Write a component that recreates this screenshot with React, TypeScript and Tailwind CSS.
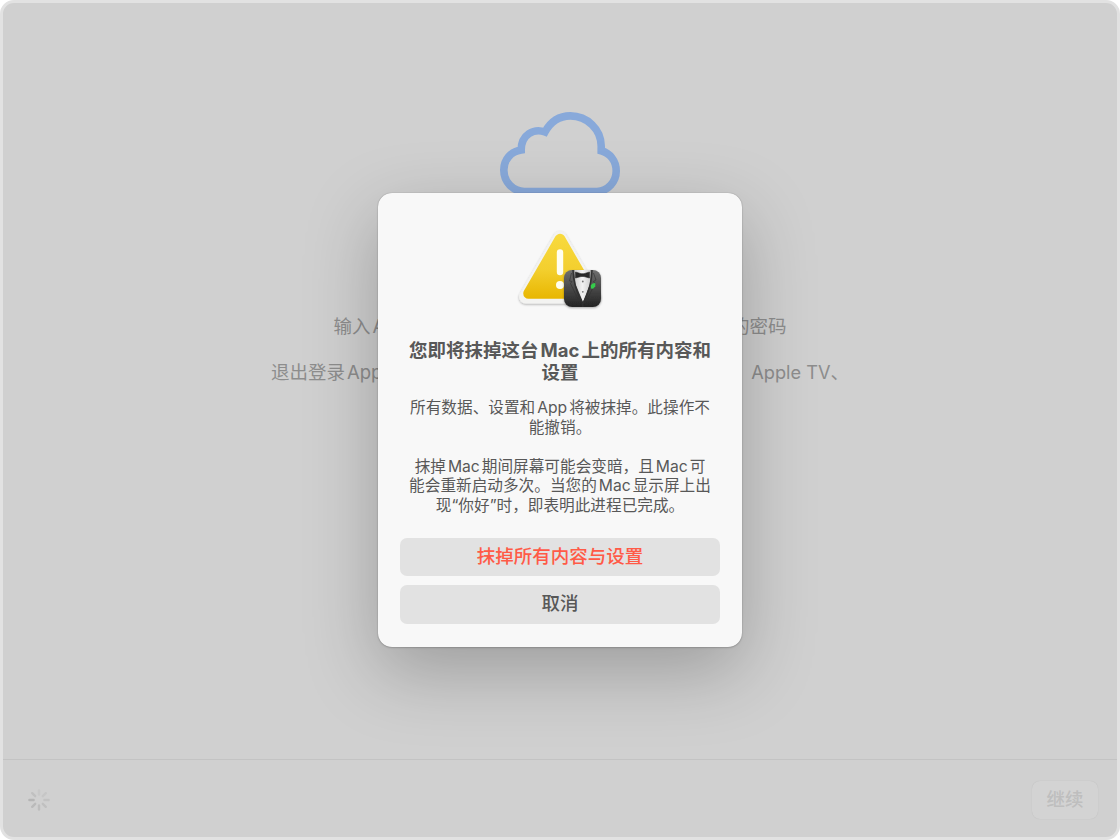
import type { ReactNode } from 'react';

function Line({ children, className = '' }: { children: ReactNode; className?: string }) {
  return <span className={`flex items-baseline justify-center whitespace-nowrap ${className}`}>{children}</span>;
}

function Latin({ children }: { children: ReactNode }) {
  return <span className="mx-[2px] inline-block font-[Inter]">{children}</span>;
}

function Cloud() {
  return (
    <svg width="140" height="100" viewBox="0 0 140 100" fill="none" stroke="#88a9da" strokeWidth="7.6">
      <path d="M34.5 91.5 H107 A19.8 20.5 0 0 0 126.2 70.7 C126.2 61 120 53 111.2 50.7 V46 A31 30.4 0 0 0 80.3 15.9 C70 15.9 61 21 55 32 C44 28 31.2 34.5 31.2 50 C21 51.5 13.8 59.5 13.8 70 A20.6 21.5 0 0 0 34.5 91.5 Z" />
    </svg>
  );
}

function WarningIcon() {
  return (
    <svg width="100" height="92" viewBox="0 0 100 92">
      <defs>
        <linearGradient id="yellow" x1="0" y1="12" x2="0" y2="77" gradientUnits="userSpaceOnUse">
          <stop offset="0" stopColor="#f8da3e" />
          <stop offset="0.55" stopColor="#f3cf2e" />
          <stop offset="1" stopColor="#e8b600" />
        </linearGradient>
        <linearGradient id="suit" x1="0" y1="0" x2="0" y2="1">
          <stop offset="0" stopColor="#707070" />
          <stop offset="0.5" stopColor="#484848" />
          <stop offset="1" stopColor="#242424" />
        </linearGradient>
        <linearGradient id="shirt" x1="0" y1="0" x2="1" y2="0">
          <stop offset="0" stopColor="#cfcfcf" />
          <stop offset="0.5" stopColor="#f2f2f2" />
          <stop offset="1" stopColor="#cfcfcf" />
        </linearGradient>
        <filter id="soft" x="-20%" y="-20%" width="140%" height="150%">
          <feDropShadow dx="0" dy="1" stdDeviation="1" floodOpacity="0.32" />
        </filter>
        <clipPath id="tile"><rect x="54" y="48" width="37" height="37" rx="8" /></clipPath>
      </defs>
      <path d="M50 15.5 L84.5 75 H15.5 Z" fill="#f3f3f1" stroke="#f3f3f1" strokeWidth="13" strokeLinejoin="round" filter="url(#soft)" />
      <path d="M50 17 L81.5 71.5 H18.5 Z" fill="url(#yellow)" stroke="url(#yellow)" strokeWidth="10.5" strokeLinejoin="round" />
      <path d="M50 30.5 V50" stroke="#fffef0" strokeWidth="6.4" strokeLinecap="round" />
      <circle cx="50" cy="63" r="4" fill="#fffef0" />
      <g filter="url(#soft)">
        <g clipPath="url(#tile)">
          <rect x="54" y="48" width="37" height="37" fill="url(#suit)" />
          <path d="M64.5 48 H80.5 L80 62 L73 80 L65.5 62 Z" fill="url(#shirt)" />
          <path d="M63 48 C63 58 67 71 72.8 82 V85 M82 48 C82 58 79 70 72.8 82" fill="none" stroke="#303030" strokeWidth="1.5" />
          <path d="M61.5 51 L59.5 59 L62 59.5 L60.5 61.5 L68 77 M83.5 51 L86 58 L83.5 59.5 L85 61.5 L77.5 77" fill="none" stroke="#303030" strokeWidth="0.6" />
          <path d="M65.5 50 L71 51.7 H74 L79.5 50 V56 L74 54.5 H71 L65.5 56 Z" fill="#292929" stroke="#292929" strokeWidth="0.6" strokeLinejoin="round" />
          <circle cx="72.8" cy="59.5" r="0.9" fill="#777" />
          <circle cx="72.8" cy="69.8" r="0.9" fill="#777" />
          <path d="M81 66.5 L80.7 63.5 L82.5 61.6 L85.4 61 L85.2 64.4 L83 66.7 Z" fill="#35cc4b" />
        </g>
      </g>
    </svg>
  );
}

const spokes = [
  { angle: 0, tone: '#c8c8c8' },
  { angle: 45, tone: '#c6c6c6' },
  { angle: 90, tone: '#c2c2c2' },
  { angle: 135, tone: '#c0c0c0' },
  { angle: 180, tone: '#bdbdbd' },
  { angle: 225, tone: '#bababa' },
  { angle: 270, tone: '#b5b5b5' },
  { angle: 315, tone: '#c0c0c0' },
];

function Spinner() {
  return (
    <svg width="24" height="24" viewBox="-12 -12 24 24" strokeWidth="2.4" strokeLinecap="round">
      {spokes.map(({ angle, tone }) => (
        <path key={angle} d="M0 -5.4 V-9.6" stroke={tone} transform={`rotate(${angle})`} />
      ))}
    </svg>
  );
}

function EraseDialog() {
  return (
    <section role="alertdialog" className="flex h-[454px] w-[364px] flex-col items-center rounded-[14px] bg-[#f8f8f8] px-[22px] pt-[29px] text-[#585858] shadow-[0_0_1px_rgba(0,0,0,0.4),0_1px_2px_rgba(0,0,0,0.15),0_24px_72px_rgba(0,0,0,0.25)]">
      <WarningIcon />
      <h1 className="mt-[25px] text-[18.5px] leading-[22px] font-bold">
        <Line>您即将抹掉这台<Latin>Mac</Latin>上的所有内容和</Line>
        <Line>设置</Line>
      </h1>
      <p className="mt-[15px] text-[15.65px] leading-[19.6px]">
        <Line>所有数据、设置和<Latin>App</Latin>将被抹掉。此操作不</Line>
        <Line>能撤销。</Line>
      </p>
      <p className="mt-[19.6px] text-[15.65px] leading-[19.6px]">
        <Line>抹掉<Latin>Mac</Latin>期间屏幕可能会变暗，且<Latin>Mac</Latin>可</Line>
        <Line>能会重新启动多次。当您的<Latin>Mac</Latin>显示屏上出</Line>
        <Line>现<span className="font-[Inter]">“</span>你好<span className="font-[Inter]">”</span>时，即表明此进程已完成。</Line>
      </p>
      <div className="mt-[22px] flex w-full flex-col gap-[9px] text-[18.5px] font-medium">
        <button className="flex h-[38.5px] shrink-0 items-center justify-center rounded-[7px] bg-[#e2e2e2] text-[#ff5a47]"><span>抹掉所有内容与设置</span></button>
        <button className="flex h-[38.5px] shrink-0 items-center justify-center rounded-[7px] bg-[#e2e2e2]"><span>取消</span></button>
      </div>
    </section>
  );
}

export default function App() {
  return (
    <div className="h-[840px] w-[1120px] overflow-hidden bg-white font-[Inter,'Noto_Sans_CJK_SC',sans-serif]">
      <main className="relative flex h-full flex-col overflow-hidden rounded-[14px] border-[3px] border-[#e2e2e2] bg-[#d0d0d0]">
        <div className="flex flex-1 flex-col items-center pt-[97px] text-[18.5px] leading-[28px] text-[#8d8d8d]">
          <Cloud />
          <div className="mt-[112px] flex w-[453px] justify-between">
            <span>输入<Latin>A</Latin></span>
            <span>的密码</span>
          </div>
          <div className="mt-[18px] flex w-[578px] justify-between">
            <span>退出登录<Latin>App</Latin></span>
            <span><span className="text-[18.2px]">Apple TV</span>、</span>
          </div>
        </div>
        <footer className="flex h-[78px] items-center justify-between border-t border-[#c3c3c3] pt-[2px] pr-[19px] pl-[24px]">
          <Spinner />
          <button className="flex h-[38px] w-[66px] items-center justify-center rounded-[8px] bg-[#d3d3d3] text-[18.5px] font-medium text-[#bebebe] shadow-[0_0_1px_rgba(0,0,0,0.12)]">继续</button>
        </footer>
        <div className="absolute inset-0 flex items-center justify-center">
          <EraseDialog />
        </div>
      </main>
    </div>
  );
}
